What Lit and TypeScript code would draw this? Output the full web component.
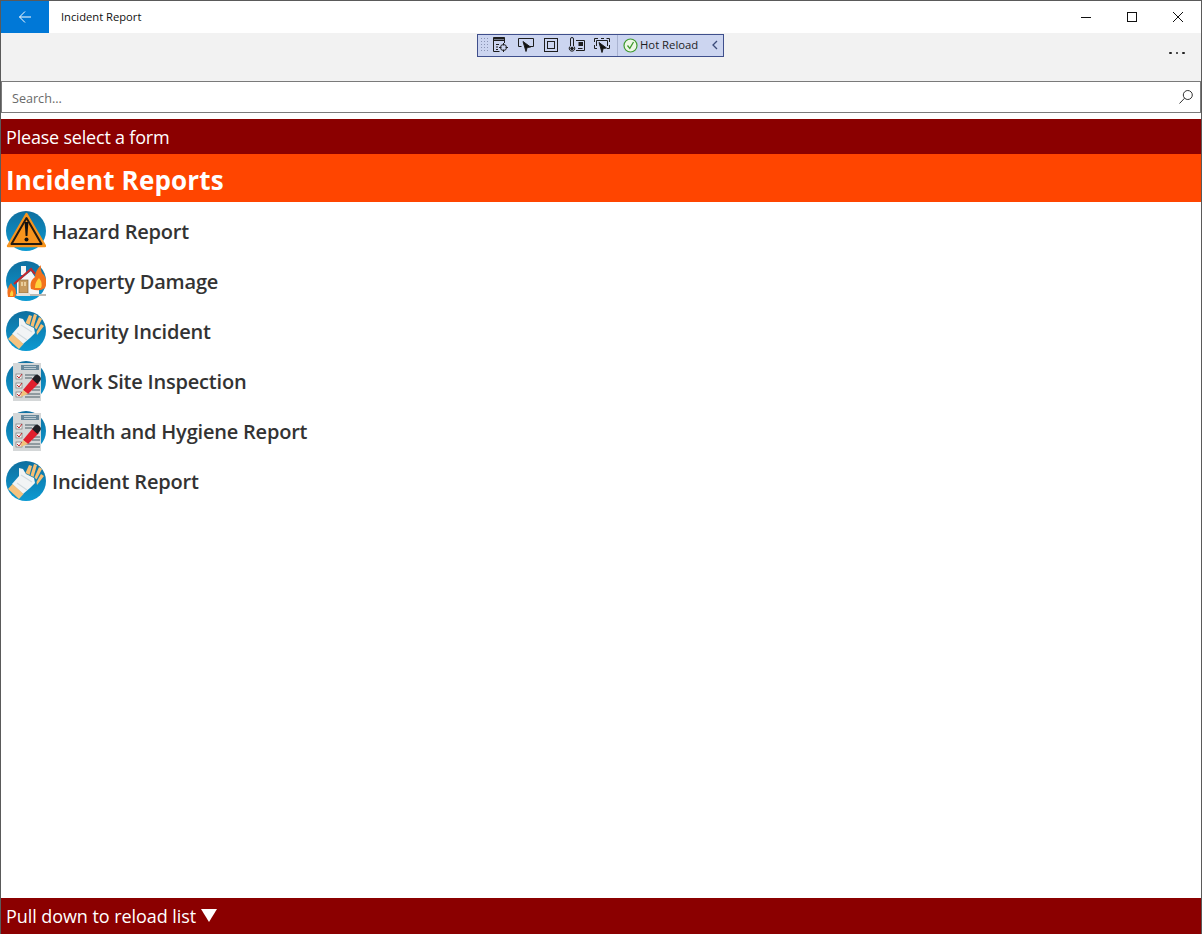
import { LitElement, html, css, svg } from "lit";
import { customElement } from "lit/decorators.js";

const disc = (id: string) => svg`<defs><linearGradient id=${id} x1="0" y1="0" x2="0" y2="1"><stop offset="0" stop-color="#0f6f9f"/><stop offset="1" stop-color="#0c9ad2"/></linearGradient></defs><circle cx="20" cy="20" r="20" fill="url(#${id})"/>`;

const glove = (id: string) => svg`${disc(id)}
  <path d="M6 23 L13 15 L13 7 L17 8 L20 13 L28 17 L29 22 L24 27 L17 33 Z" fill="#f1f4f5"/>
  <path d="M11 22 L21 29 M15 14 L26 21" stroke="#d3dbdf" stroke-width="1.2"/>
  <path d="M2 28 L6.5 23 L17.5 33 L13 38 Z" fill="#f5c37f"/>
  <path d="M19.5 12 L23 4 L26 5 L23.5 14 Z M24.5 14.5 L28 3 L31 4 L27.5 16 Z M28.5 16.5 L33 6 L36 8 L30.5 18.5 Z M30.5 21 L35 13 L38 15 L31 24 Z" fill="#f7bf74"/>`;

const form = (id: string) => svg`${disc(id)}
  <rect x="7" y="2" width="28" height="38" fill="#d4d7d8"/>
  <rect x="15" y="4" width="18" height="5" fill="#68889a"/>
  <path d="M18 5.5 H30 M18 7.5 H30" stroke="#cfdbe1" stroke-width=".8"/>
  <rect x="10" y="13" width="6" height="5" fill="#f3f4f4" stroke="#777" stroke-width=".7"/>
  <rect x="10" y="22" width="6" height="5" fill="#f3f4f4" stroke="#777" stroke-width=".7"/>
  <rect x="10" y="31" width="6" height="5" fill="#f3f4f4" stroke="#777" stroke-width=".7"/>
  <path d="M11 15 l2 2 l3 -4 M11 24 l2 2 l3 -4 M11 33 l2 2 l3 -4" stroke="#c0272d" stroke-width="1" fill="none"/>
  <path d="M19 14 H32 M19 17 H26 M26 26 H34 M26 29 H34 M19 33 H34 M19 36 H34" stroke="#78868c" stroke-width="1.5"/>
  <path d="M17 29 L27 17 L33 22 L22 33 Z" fill="#e01f2d"/>
  <path d="M26 18 L29 14.5 Q31 13 33.5 15 Q36 17.5 34 20 L31.5 23 Z" fill="#1e1e24"/>
  <path d="M17 29 L22 33 L14 36 Z" fill="#f2c27a"/>`;

const hazard = svg`${disc("g1")}
  <path d="M20.5 3 L39 35 H2 Z" fill="#f7941d" stroke="#f7941d" stroke-width="2.4" stroke-linejoin="round"/>
  <path d="M20.5 7 L35.5 33 H5.5 Z" fill="#f7941d" stroke="#231a10" stroke-width="2" stroke-linejoin="round"/>
  <path d="M18.6 11 H22.4 L21.4 25 H19.6 Z" fill="#111"/><circle cx="20.5" cy="28.5" r="2" fill="#111"/>`;

const fire = svg`${disc("g2")}
  <path d="M15 5 H20 V14 H15 Z" fill="#f5f5f5"/>
  <path d="M11 21 L25 10 L33 22 V33 H11 Z" fill="#f6f6f6"/>
  <path d="M8 23 L25 8 L29 13" fill="none" stroke="#c1272d" stroke-width="2.2"/>
  <rect x="13" y="19" width="9" height="13" fill="#c79a5e" stroke="#8a6a3c" stroke-width=".7"/>
  <rect x="15" y="21" width="2" height="4" fill="#e9cd9c"/><rect x="18" y="21" width="2" height="4" fill="#e9cd9c"/>
  <path d="M10 35 H45 V33 H10 Z" fill="#bdbab4"/><path d="M11 32 H24 V35 H11 Z" fill="#e6e1d8"/>
  <path d="M25 28 Q23 20 29 16 Q29 10 35 4 Q34 11 38 14 Q42 20 39 27 Q34 31 25 28 Z" fill="#f2711c"/>
  <path d="M29 27 Q29 21 33 17 Q37 22 35 27 Z" fill="#ffd23c"/>
  <path d="M2 36 Q0 28 5 22 Q7 26 9 27 Q11 32 9 36 Z" fill="#f2711c"/>
  <path d="M4 35 Q4 31 6 29 Q8 32 7 35 Z" fill="#ffd23c"/>`;

const rows = [
  ["Hazard Report", hazard],
  ["Property Damage", fire],
  ["Security Incident", glove("g3")],
  ["Work Site Inspection", form("g4")],
  ["Health and Hygiene Report", form("g5")],
  ["Incident Report", glove("g6")],
] as const;

@customElement("app-root")
export class AppRoot extends LitElement {
  static styles = css`
    :host { display: block; width: 1202px; height: 934px; font-family: "Open Sans", "Noto Sans", sans-serif; }
    * { box-sizing: border-box; }
    .win { width: 1202px; height: 934px; border: 1px solid #5a5a5a; border-bottom: 0; display: flex; flex-direction: column; background: #fff; position: relative; overflow: hidden; }
    .title { height: 32px; display: flex; align-items: center; flex: none; }
    .back { width: 48px; height: 32px; background: #0078d7; display: flex; align-items: center; justify-content: center; }
    .name { margin-left: 12px; font-size: 11.2px; line-height: 32px; height: 32px; color: #111; flex: 1; }
    .caps { display: flex; }
    .cap { width: 46px; height: 32px; display: flex; align-items: center; justify-content: center; }
    .cmd { height: 48px; background: #f2f2f2; flex: none; display: flex; justify-content: flex-end; align-items: flex-start; }
    .dots { width: 48px; height: 40px; display: flex; gap: 4px; align-items: center; justify-content: center; }
    .dots i { width: 2.5px; height: 2.5px; background: #222; border-radius: 50%; }
    .search { height: 32px; border: 1px solid #7a7a7a; flex: none; display: flex; align-items: center; justify-content: space-between; padding: 0 6px 0 10px; font-size: 12.6px; color: #6a6a6a; }
    .search span { margin-top: 2px; }
    .red { background: #8b0000; color: #fff; font-size: 18px; display: flex; align-items: center; padding-left: 5px; flex: none; }
    .hdr { height: 35px; margin-top: 6px; letter-spacing: -0.2px; }
    .org { height: 48px; background: #ff4500; color: #fff; font-size: 26px; font-weight: 700; letter-spacing: 0.18px; display: flex; align-items: center; padding: 3px 0 0 5px; flex: none; }
    .list { flex: 1; padding-top: 4px; display: flex; flex-direction: column; }
    .row { height: 50px; display: flex; align-items: center; padding-left: 5px; gap: 6px; font-size: 20px; font-weight: 600; letter-spacing: -0.2px; color: #333; }
    .row svg { display: block; flex: none; }
    .foot { height: 36px; gap: 5px; padding-bottom: 1px; letter-spacing: -0.07px; }
    .tools { position: absolute; left: 476px; top: 33px; width: 247px; height: 23px; padding-bottom: 1px; background: #ccd5f0; border: 1px solid #3f4f8c; display: flex; align-items: center; font-size: 11.3px; color: #1e1e1e; }
    .grip { width: 8px; height: 16px; margin-left: 2px; background-image: radial-gradient(#8a94b4 0.7px, transparent 0.8px); background-size: 3px 3px; }
    .tool { width: 25px; height: 21px; display: flex; align-items: center; justify-content: center; }
    .tool.nudge { padding-left: 3px; }
    .sep { width: 1px; height: 21px; background: #a9b3d1; margin: 0 5px 0 4px; }
    .hot { display: flex; align-items: center; gap: 3px; flex: 1; }
    .hot span { margin-top: -1px; margin-left: -1px; }
    .chev { margin-right: 4px; display: block; }
  `;

  render() {
    return html`<div class="win">
      <div class="title">
        <div class="back"><svg width="16" height="16" viewBox="0 0 16 16" fill="none" stroke="#fff" stroke-width="1"><path d="M14 8 H2.5 M8 2.5 L2.5 8 L8 13.5"/></svg></div>
        <div class="name">Incident Report</div>
        <div class="caps">
          <div class="cap"><svg width="12" height="12" viewBox="0 0 12 12" stroke="#111"><path d="M1 6.5 H11"/></svg></div>
          <div class="cap"><svg width="12" height="12" viewBox="0 0 12 12" fill="none" stroke="#111"><rect x="1.5" y="1.5" width="9" height="9"/></svg></div>
          <div class="cap"><svg width="12" height="12" viewBox="0 0 12 12" stroke="#111"><path d="M1 1 L11 11 M11 1 L1 11"/></svg></div>
        </div>
      </div>
      <div class="cmd"><div class="dots"><i></i><i></i><i></i></div></div>
      <div class="search"><span>Search...</span>
        <svg width="16" height="16" viewBox="0 0 16 16" fill="none" stroke="#333" stroke-width="1"><circle cx="9.8" cy="6" r="4.5"/><path d="M6.6 9.2 L1.5 14.5"/></svg>
      </div>
      <div class="red hdr">Please select a form</div>
      <div class="org">Incident Reports</div>
      <div class="list">
        ${rows.map(([t, ic]) => html`<div class="row"><svg width="40" height="40" viewBox="0 0 40 40">${ic}</svg><span>${t}</span></div>`)}
      </div>
      <div class="red foot">Pull down to reload list<svg width="16" height="13" viewBox="0 0 16 13"><path d="M0 0 H16 L8 13 Z" fill="#fff"/></svg></div>
      <div class="tools">
        <div class="grip"></div>
        <div class="tool"><svg width="18" height="18" viewBox="0 0 18 18" fill="none" stroke="#1e1e1e"><path d="M7.5 15.5 H1.5 V1.5 H12.5 V7 M1.5 4.5 H12.5" /><path d="M1.5 2.5 H12.5" stroke-width="2"/><path d="M4 8.5 H7 M4 11 H6 M4 13.5 H6"/><circle cx="11.5" cy="11.5" r="3"/><path d="M11.5 7 V9.5 M11.5 13.5 V16 M7 11.5 H9.5 M13.5 11.5 H16"/></svg></div>
        <div class="tool"><svg width="18" height="18" viewBox="0 0 18 18" fill="none" stroke="#1e1e1e"><path d="M4.5 10.5 H1.5 V2.5 H16.5 V10.5 H13"/><path d="M6 5.5 L13.5 11 L10.2 11.5 L9 15.5 Z" fill="#111"/></svg></div>
        <div class="tool"><svg width="16" height="16" viewBox="0 0 16 16" fill="none" stroke="#1e1e1e"><rect x="1.5" y="1.5" width="13" height="13"/><rect x="4.5" y="4.5" width="7" height="7"/></svg></div>
        <div class="tool nudge"><svg width="18" height="18" viewBox="0 0 18 18" fill="none" stroke="#1e1e1e"><path d="M2.5 10 V3 A1.5 1.5 0 0 1 5.5 3 V10 A2.8 2.8 0 1 1 2.5 10 Z"/><circle cx="4" cy="12.5" r="1.3" fill="#1e1e1e"/><path d="M8 4.5 H16.5 V14.5 H8"/><rect x="11" y="6.5" width="3.5" height="3" fill="#1e1e1e"/><path d="M10 12.5 H14.5"/></svg></div>
        <div class="tool nudge"><svg width="18" height="18" viewBox="0 0 18 18" fill="none" stroke="#1e1e1e"><path d="M4 12.5 H1.5 V9 M1.5 6 V2.5 H5 M8 2.5 H11 M13.5 2.5 H16.5 V6 M16.5 9 V12.5 H14"/><path d="M3.5 10 V4.5 H14.5 V10"/><path d="M6 6.5 L13.5 12 L10.2 12.5 L9 16.5 Z" fill="#111"/></svg></div>
        <div class="sep"></div>
        <div class="hot"><svg width="15" height="15" viewBox="0 0 15 15"><circle cx="7.5" cy="7.5" r="6.5" fill="#eef7e6" stroke="#3f9a2e" stroke-width="1.2"/><path d="M4.5 7.5 L6.8 10.3 L10.5 4" fill="none" stroke="#3f9a2e" stroke-width="1.3"/></svg><span>Hot Reload</span></div>
        <svg class="chev" width="8" height="10" viewBox="0 0 8 10" fill="none" stroke="#3a4a78" stroke-width="1.3"><path d="M6 1 L2 5 L6 9"/></svg>
      </div>
    </div>`;
  }
}
